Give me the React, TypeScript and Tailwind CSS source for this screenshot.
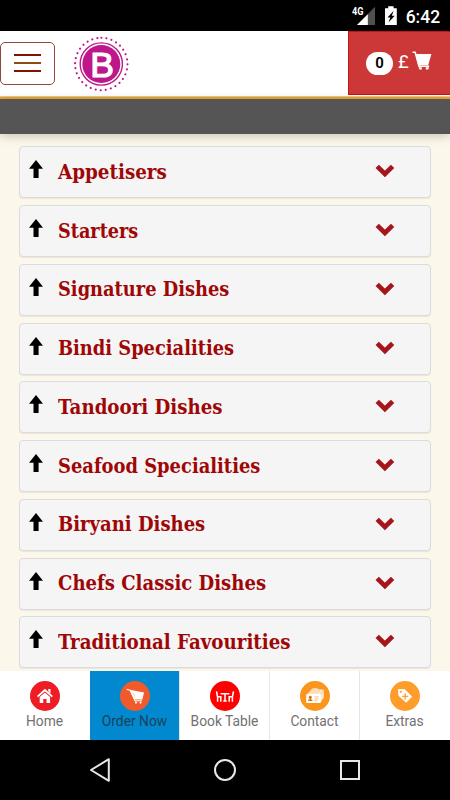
import type { ReactNode } from 'react';

interface Category {
  name: string;
  fit: string;
}

interface Tab {
  label: string;
  color: string;
  icon: ReactNode;
  active?: boolean;
}

const categories: Category[] = [
  { name: 'Appetisers', fit: 'scale-x-[0.993]' },
  { name: 'Starters', fit: 'scale-x-[0.957]' },
  { name: 'Signature Dishes', fit: 'scale-x-[0.966]' },
  { name: 'Bindi Specialities', fit: 'scale-x-[0.967]' },
  { name: 'Tandoori Dishes', fit: 'scale-x-[0.987]' },
  { name: 'Seafood Specialities', fit: 'scale-x-[0.97]' },
  { name: 'Biryani Dishes', fit: 'scale-x-[0.977]' },
  { name: 'Chefs Classic Dishes', fit: 'scale-x-[0.979]' },
  { name: 'Traditional Favourities', fit: 'scale-x-[0.989]' },
];

const HomeIcon = () => (
  <svg viewBox="0 0 30 30" className="w-[30px] h-[30px]">
    <path d="M7.5 15.6 14.9 9l7.4 6.6" fill="none" stroke="#fff" strokeWidth="1.8" />
    <path d="M18.3 8h2.2v4.4l-2.2-1.9z" fill="#fff" />
    <path d="M9.7 16 14.9 11.6l5.2 4.4v6h-3.6v-3.9h-3.2V22H9.7z" fill="#fff" />
  </svg>
);

const OrderIcon = () => (
  <svg viewBox="0 0 30 30" className="w-[30px] h-[30px]">
    <path d="M6.6 8.2 10 9.1l5 10.6h7" fill="none" stroke="#fff" strokeWidth="1.1" />
    <path d="M9.8 8.8 24 11.4l-1.6 7.2h-8.2z" fill="#fff" />
    <path d="M13 11.5 15 16.5" stroke="#f58a6a" strokeWidth=".4" />
    <circle cx="16" cy="21.6" r="1.1" fill="#fff" />
    <circle cx="20.6" cy="21.6" r="1.1" fill="#fff" />
  </svg>
);

const TableIcon = () => (
  <svg viewBox="0 0 30 30" className="w-[30px] h-[30px]" fill="none" stroke="#fff" strokeWidth="1.5">
    <path d="M6.5 10.3 7.6 16v4.8M7.6 15.8h3.2v5" />
    <path d="M23.5 10.3 22.4 16v4.8M22.4 15.8h-3.2v5" />
    <path d="M10.6 12.8h8.8M15 12.8v7.4M13.3 20h3.4" />
  </svg>
);

const ContactIcon = () => (
  <svg viewBox="0 0 30 30" className="w-[30px] h-[30px]">
    <path d="M7.3 13 12.3 7.4l4.6-.2 1.6 1 5.4.6-.2 8L20 22z" fill="#fdebd2" />
    <path d="M8.8 12.6 13.2 8M11.2 12.6 15.4 8M13.8 12.6 17.6 8.4M16.4 12.8l4-4.2M19.6 14l4.2-4.5" stroke="#fa961c" strokeWidth=".4" />
    <rect x="6.2" y="13.1" width="14.4" height="9" rx=".8" fill="#fff" />
    <circle cx="10.3" cy="16.2" r="1.5" fill="#d97008" />
    <path d="M9.7 17h1.2v1.5h1.5v1.6H8.2v-1.6h1.5z" fill="#d97008" />
    <path d="M14.3 15.4h4.4v.8h-4.4zM14.3 17.4h4.4v.8h-4.4zM14.3 19.3H17v.7h-2.7z" fill="#f9b66c" />
  </svg>
);

const ExtrasIcon = () => (
  <svg viewBox="0 0 30 30" className="w-[30px] h-[30px]">
    <path d="M8.6 8.6 14.9 8.8 21.6 15.7 16.2 21.2 8.9 14.6z" fill="#fff" stroke="#fff" strokeWidth="1" strokeLinejoin="round" />
    <circle cx="10.8" cy="10.8" r="1.1" fill="#fe9d2b" />
    <path d="M15.2 12.3v6.2M12.1 15.4h6.2" stroke="#fe9d2b" strokeWidth="1.4" />
  </svg>
);

const tabs: Tab[] = [
  { label: 'Home', color: 'bg-[#ee1c25]', icon: <HomeIcon /> },
  { label: 'Order Now', color: 'bg-[#f15a2b]', icon: <OrderIcon />, active: true },
  { label: 'Book Table', color: 'bg-[#ff0000]', icon: <TableIcon /> },
  { label: 'Contact', color: 'bg-[#fa961c]', icon: <ContactIcon /> },
  { label: 'Extras', color: 'bg-[#fe9d2b]', icon: <ExtrasIcon /> },
];

function StatusBar() {
  return (
    <div className="h-[31px] shrink-0 bg-black flex text-white font-[Roboto,sans-serif]">
      <svg viewBox="0 0 100 31" className="ml-[350px] w-[100px] h-[31px]">
        <path d="M25 6.8V25H7z" fill="#505050" />
        <path d="M17.8 14.2V25H7z" fill="#fff" />
        <path d="M1 4h13v11.5H1z" fill="#000" />
        <text x="2" y="14.6" fontSize="10" fontWeight="700" fill="#fff" textLength="11.5" lengthAdjust="spacingAndGlyphs">4G</text>
        <path d="M38.2 6.2h5.4v2h3.2V25H35V8.2h3.2z" fill="#fff" />
        <path d="m43.7 10.8-6.2 6.7h2.8l-1.8 5 6.2-6.7h-2.9z" fill="#000" />
        <text x="55.7" y="22.7" fontSize="18.4" fontWeight="500" fill="#fff" textLength="34.4" lengthAdjust="spacingAndGlyphs">6:42</text>
      </svg>
    </div>
  );
}

function Logo() {
  return (
    <svg viewBox="0 0 56 56" className="w-14 h-14 ml-[18px]">
      <circle cx="28.3" cy="28" r="26.2" fill="none" stroke="#bd1789" strokeWidth="2.1" strokeDasharray="0.1 5.045" strokeLinecap="round" transform="rotate(-90 28.3 28)" />
      <circle cx="28.3" cy="28" r="21.1" fill="none" stroke="#bd1789" strokeWidth="1.4" />
      <circle cx="28.3" cy="28" r="19" fill="#bd1789" />
      <text x="17.2" y="40.6" fontFamily="Liberation Sans, sans-serif" fontSize="35.5" fill="#fff" stroke="#fff" strokeWidth="1.2">B</text>
    </svg>
  );
}

function Header() {
  return (
    <header className="shrink-0">
      <div className="h-[65px] bg-white flex items-center justify-between">
        <div className="flex items-center">
          <button className="w-[55px] h-[43px] -mt-px rounded-[5px] border border-[#8d4a38] flex flex-col items-center justify-center gap-[5.7px]">
            <span className="w-[27px] h-[2px] bg-[#801400]" />
            <span className="w-[27px] h-[2px] bg-[#8b4c12]" />
            <span className="w-[27px] h-[2px] bg-[#801400]" />
          </button>
          <Logo />
        </div>
        <div className="w-[102px] h-16 mb-px bg-[#cb3837] border border-r-0 border-[#cc1111] flex items-center pl-[17px] text-white font-[Roboto,sans-serif]">
          <span className="w-[27px] h-[23px] rounded-full bg-white text-black text-[15px] font-semibold flex items-center justify-center">0</span>
          <span className="ml-[5px] -mt-[2px] text-[18.5px] leading-none">£</span>
          <svg viewBox="0 0 20 20" className="w-5 h-5 ml-[3px] -mt-[5px]">
            <path d="M.6 1.3h2.6L7 15.3h10.2" fill="none" stroke="#fff" strokeWidth="1.6" />
            <path d="M3.2 3.1h16.2l-3.2 11.2H6.4z" fill="#fff" />
            <path d="M6.6 16.2h3.2v2.4H7.4zM13.8 16.2h3v1.6l-1 .8h-2z" fill="#fff" />
          </svg>
        </div>
      </div>
      <div className="h-[3px] bg-[#e5a540] border-t border-[#f3c77c]" />
    </header>
  );
}

function CategoryRow({ name, fit }: Category) {
  return (
    <div className="h-[52px] shrink-0 rounded-[4px] bg-[#f5f5f5] border border-[#dcdcdc] shadow-[0_1px_1px_rgba(0,0,0,0.07)] flex items-center">
      <svg viewBox="0 0 14 18" className="w-[14px] h-[18px] ml-[9px] -mt-[6px]">
        <path d="M7 0 14 8.8H9.6V18H4.5V8.8H0z" fill="#000" />
      </svg>
      <h2 className={`ml-[15px] flex-1 min-w-0 whitespace-nowrap origin-left text-[20.5px] font-bold text-[#9f0707] font-['DejaVu_Serif_Condensed','DejaVu_Serif',serif] ${fit}`}>
        {name}
      </h2>
      <svg viewBox="0 0 20 14" className="w-5 h-[14px] mr-[35px] -mt-[2px]">
        <path d="m2.2 2.4 7.7 7.5 7.7-7.5" fill="none" stroke="#a6151a" strokeWidth="4.8" />
      </svg>
    </div>
  );
}

function TabBar() {
  return (
    <nav className="h-[69px] shrink-0 bg-white flex">
      {tabs.map((tab, i) => (
        <div
          key={tab.label}
          className={`w-[90px] flex flex-col items-center pt-[10px] font-[Roboto,sans-serif] border-r ${
            tab.active ? 'bg-[#0288ce] text-[#18435c] border-[#0288ce]' : 'text-[#717171]'
          } ${i === 4 || i === 0 ? 'border-transparent' : 'border-[#e6e6e6]'}`}
        >
          <div className={`w-[30px] h-[30px] rounded-full ${tab.color}`}>{tab.icon}</div>
          <span className="text-[13.8px] leading-5 whitespace-nowrap">{tab.label}</span>
        </div>
      ))}
    </nav>
  );
}

function SystemNav() {
  return (
    <div className="h-[60px] shrink-0 bg-black">
      <svg viewBox="0 0 450 60" className="w-full h-full" fill="none" stroke="#e8e8e8" strokeWidth="2">
        <path d="M108.8 19.2v21.6L91 30z" strokeLinejoin="round" />
        <circle cx="225" cy="30" r="10" />
        <rect x="341" y="21" width="18" height="18" />
      </svg>
    </div>
  );
}

export default function App() {
  return (
    <div className="w-[450px] h-[800px] flex flex-col overflow-hidden bg-[#fbf7eb]">
      <StatusBar />
      <Header />
      <div className="h-[34.5px] shrink-0 bg-[#555555] shadow-[0_2px_10px_rgba(0,0,0,0.2)]" />
      <main className="flex-1 min-h-0 overflow-hidden flex flex-col gap-[6.75px] pt-[12.8px] pl-[19px] pr-[19px]">
        {categories.map(category => (
          <CategoryRow key={category.name} {...category} />
        ))}
      </main>
      <TabBar />
      <SystemNav />
    </div>
  );
}
